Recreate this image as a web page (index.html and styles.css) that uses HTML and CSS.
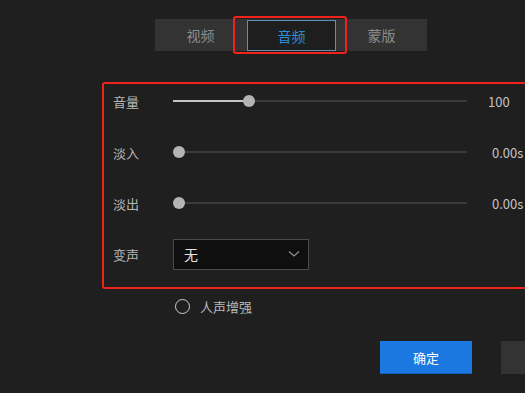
FILE: index.html
```html
<!DOCTYPE html>
<html lang="zh-CN">

<head>
  <meta charset="UTF-8" />
  <meta name="viewport" content="width=device-width, initial-scale=1.0" />
  <title>音频设置</title>
  <link rel="stylesheet" href="styles.css">
</head>

<body>
  <div class="tabs">
    <div class="tab">视频</div>
    <div class="tab active">音频<span class="mark"></span></div>
    <div class="tab">蒙版</div>
  </div>

  <div class="panel">
    <div class="row">
      <span class="label">音量</span>
      <div class="slider">
        <div class="fill" style="width: 76px"></div>
        <div class="thumb" style="left: 76px"></div>
      </div>
      <span class="value">100</span>
    </div>
    <div class="row">
      <span class="label">淡入</span>
      <div class="slider">
        <div class="thumb" style="left: 6px"></div>
      </div>
      <span class="value time">0.00s</span>
    </div>
    <div class="row">
      <span class="label">淡出</span>
      <div class="slider">
        <div class="thumb" style="left: 6px"></div>
      </div>
      <span class="value time">0.00s</span>
    </div>
    <div class="row">
      <span class="label">变声</span>
      <div class="select">
        <span>无</span>
        <svg width="12" height="8" viewBox="0 0 12 8">
          <path d="M1 1.5 L6 6 L11 1.5" fill="none" stroke="#8a8a8a" stroke-width="1.3" />
        </svg>
      </div>
    </div>
  </div>

  <label class="radio">
    <span class="circle"></span>
    <span>人声增强</span>
  </label>

  <div class="actions">
    <button class="primary">确定</button>
    <button class="secondary" aria-label="取消"></button>
  </div>
</body>

</html>
```

FILE: styles.css
```css
* {
  box-sizing: border-box;
  margin: 0;
  padding: 0;
  font-family: 'Noto Sans CJK SC', 'Noto Sans', sans-serif;
}

body {
  background-color: #1f1f1f;
  color: #bdbdbd;
  width: 525px;
  height: 393px;
  overflow: hidden;
  font-size: 13px;
}

.tabs {
  display: flex;
  width: 272px;
  height: 32px;
  margin: 19px 0 0 155px;
  background-color: #333333;
}

.tab {
  position: relative;
  flex: 1;
  display: flex;
  justify-content: center;
  align-items: center;
  font-size: 14px;
  color: #8c8c8c;
}

.tab.active {
  margin: 1px 0 0 1px;
  flex: 0 0 89px;
  background-color: #1e1e1e;
  border: 1px solid #5f8fb4;
  color: #2b8ed8;
}

.tab .mark {
  position: absolute;
  left: -15px;
  right: -12px;
  top: -5px;
  bottom: -4px;
  border: 2px solid #f0231c;
  border-radius: 3px;
}

.panel {
  display: flex;
  flex-direction: column;
  gap: 21px;
  width: 440px;
  height: 207px;
  margin: 31px 0 0 102px;
  padding: 2px 0 0 9px;
  border: 2px solid #f0231c;
  border-radius: 3px;
}

.row {
  display: flex;
  align-items: center;
  height: 30px;
}

.label {
  width: 60px;
  flex-shrink: 0;
  color: #b8b8b8;
}

.slider {
  position: relative;
  width: 294px;
  height: 2px;
  background-color: #3a3a3a;
}

.fill {
  height: 2px;
  background-color: #c4c4c4;
}

.thumb {
  position: absolute;
  top: -5px;
  width: 12px;
  height: 12px;
  margin-left: -6px;
  border-radius: 50%;
  background-color: #b4b4b4;
}

.value {
  margin-left: 21px;
  color: #c4c4c4;
}

.value.time {
  margin-left: 25px;
}

.select {
  display: flex;
  justify-content: space-between;
  align-items: center;
  width: 136px;
  height: 31px;
  padding: 0 8px 0 10px;
  background-color: #0f0f0f;
  border: 1px solid #4a4a4a;
  color: #e6e6e6;
  font-size: 14px;
}

.radio {
  display: flex;
  align-items: center;
  gap: 10px;
  margin: 8px 0 0 175px;
  color: #b8b8b8;
}

.circle {
  width: 15px;
  height: 15px;
  border: 1.5px solid #cfcfcf;
  border-radius: 50%;
}

.actions {
  display: flex;
  gap: 29px;
  margin: 25px 0 0 380px;
}

button {
  flex-shrink: 0;
  width: 92px;
  height: 33px;
  border: none;
  font-size: 13px;
  color: white;
}

button.primary {
  background-color: #1a78e0;
  border-bottom: 1px solid #1560b8;
}

button.secondary {
  background-color: #333333;
}
```
